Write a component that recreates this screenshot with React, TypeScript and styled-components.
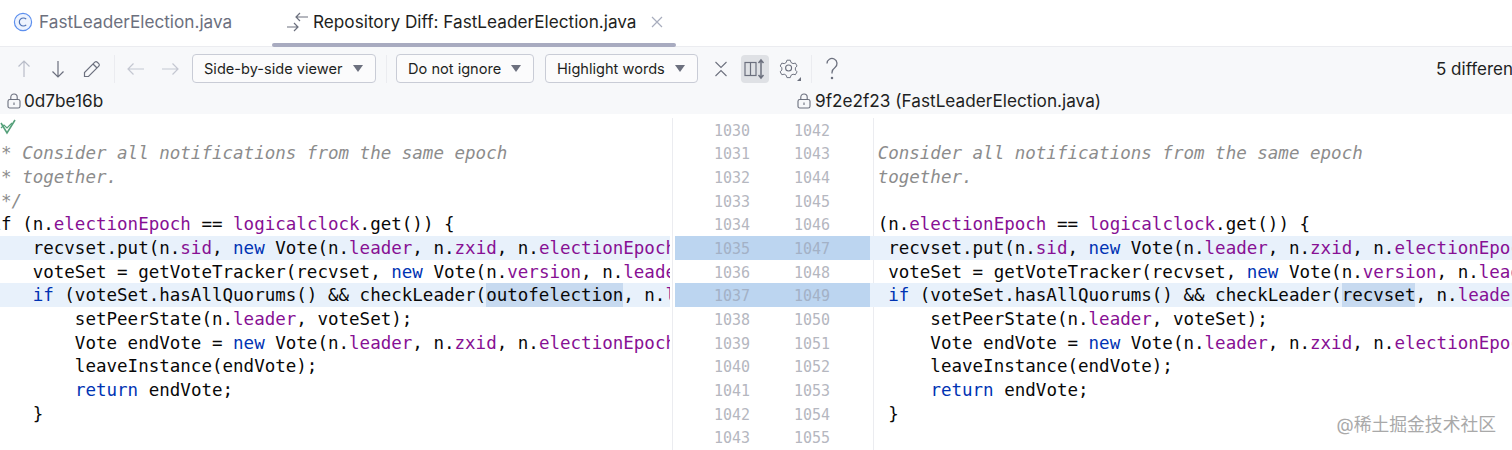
import React from 'react';
import styled, { createGlobalStyle } from 'styled-components';

const GlobalStyle = createGlobalStyle`
  html, body {
    margin: 0;
    padding: 0;
    background: #ffffff;
  }
`;

const Page = styled.div`
  width: 1512px;
  height: 450px;
  overflow: hidden;
  position: relative;
  display: flex;
  flex-direction: column;
  font-family: Inter, "Liberation Sans", sans-serif;
  color: #1e1f22;
`;

const TabBar = styled.div`
  height: 46px;
  flex: none;
  display: flex;
  background: #ffffff;
  border-bottom: 1px solid #ebecf0;
`;

const Tab = styled.div<{ $active?: boolean; $width: number }>`
  position: relative;
  width: ${p => p.$width}px;
  box-sizing: border-box;
  padding-left: ${p => (p.$active ? 14 : 13)}px;
  padding-bottom: 3px;
  display: flex;
  align-items: center;
  gap: ${p => (p.$active ? 5 : 6)}px;
  font-size: 17.2px;
  color: ${p => (p.$active ? '#1e1f22' : '#6c707e')};
  white-space: nowrap;

  ${p => p.$active && `
    &::after {
      content: '';
      position: absolute;
      left: 0;
      right: 0;
      bottom: -1px;
      height: 4px;
      border-radius: 2px;
      background: #a8abc0;
    }
  `}
`;

const CloseMark = styled.svg`
  margin-left: 9px;
`;

const Toolbar = styled.div`
  height: 43px;
  flex: none;
  box-sizing: border-box;
  padding-left: 7px;
  display: flex;
  align-items: center;
  background: #f7f8fa;
  white-space: nowrap;
`;

const IconButton = styled.div<{ $active?: boolean }>`
  width: 28px;
  height: 28px;
  margin: 0 3px;
  flex: none;
  display: flex;
  align-items: center;
  justify-content: center;
  border-radius: 4px;
  background: ${p => (p.$active ? '#dfe1e5' : 'transparent')};
`;

const Separator = styled.div<{ $left: number; $right: number }>`
  width: 1px;
  height: 28px;
  flex: none;
  margin-left: ${p => p.$left}px;
  margin-right: ${p => p.$right}px;
  background: #ebecf0;
`;

const Dropdown = styled.div<{ $width: number; $left?: number; $right?: number }>`
  width: ${p => p.$width}px;
  height: 29px;
  flex: none;
  margin-left: ${p => p.$left ?? 0}px;
  margin-right: ${p => p.$right ?? 0}px;
  box-sizing: border-box;
  padding: 0 12px 0 11px;
  display: flex;
  align-items: center;
  justify-content: space-between;
  border: 1px solid #c9ccd6;
  border-radius: 4px;
  background: #fbfbfc;
  font-size: 14.6px;
  color: #1e1f22;

  &::after {
    content: '';
    border-left: 5.5px solid transparent;
    border-right: 5.5px solid transparent;
    border-top: 7px solid #6c707e;
  }
`;

const DiffCount = styled.div`
  margin-left: 587px;
  font-size: 17px;
  color: #1e1f22;
`;

const HeaderRow = styled.div`
  height: 24px;
  flex: none;
  box-sizing: border-box;
  padding-bottom: 3px;
  display: grid;
  grid-template-columns: 797px 1fr;
  background: #f7f8fa;
  font-size: 17.2px;
`;

const HeaderCell = styled.div<{ $inset: number; $gap: number }>`
  padding-left: ${p => p.$inset}px;
  display: flex;
  align-items: center;
  gap: ${p => p.$gap}px;
  white-space: nowrap;
`;

const DiffBody = styled.div`
  flex: 1;
  min-height: 0;
  padding-top: 3.5px;
  display: flex;
  background: #ffffff;
`;

const CodePane = styled.div<{ $offset: number; $width?: number }>`
  ${p => (p.$width ? `width: ${p.$width}px; flex: none;` : 'flex: 1; min-width: 0;')}
  overflow: hidden;
  font-family: "DejaVu Sans Mono", "Liberation Mono", monospace;
  font-size: 17.52px;
  color: #080808;
  text-indent: ${p => p.$offset}px;
`;

const RightPane = styled(CodePane)`
  background: linear-gradient(#ebecf0, #ebecf0) 3px 0 / 1px 100% no-repeat;
`;

const CodeLine = styled.div<{ $changed?: boolean }>`
  height: 23.7px;
  line-height: 25.7px;
  white-space: pre;
  background: ${p => (p.$changed ? '#e8f1fb' : 'transparent')};
`;

const Gutter = styled.div`
  width: 195px;
  flex: none;
  margin-left: 2px;
  padding-left: 2px;
  border-left: 1px solid #ebecf0;
  font-family: "DejaVu Sans Mono", "Liberation Mono", monospace;
  font-size: 15px;
  color: #b5b7bf;
`;

const GutterRow = styled.div<{ $changed?: boolean }>`
  height: 23.7px;
  line-height: 26.9px;
  padding-left: 39px;
  display: grid;
  grid-template-columns: 80px 80px;
  background: ${p => (p.$changed ? '#bcd5f0' : 'transparent')};
  color: ${p => (p.$changed ? '#a3b1c6' : 'inherit')};
`;

const Comment = styled.span`
  font-style: italic;
  color: #8c8c8c;
`;

const Keyword = styled.span`
  color: #0033b3;
`;

const Field = styled.span`
  color: #871094;
`;

const WordDiff = styled.span`
  display: inline-block;
  height: 23.7px;
  text-indent: 0;
  background: #c7daf0;
`;

const CheckWrap = styled.span`
  position: absolute;
  left: 0;
  top: 119px;
  line-height: 0;
`;

const Watermark = styled.div`
  position: absolute;
  right: 16px;
  bottom: 14px;
  font-family: Inter, "Noto Sans CJK SC", sans-serif;
  font-size: 17.8px;
  line-height: 22px;
  color: #a9a9a9;
`;

const Arrow: React.FC<{ dir: 'up' | 'down' | 'left' | 'right'; color: string }> = ({ dir, color }) => {
  const rotation = { up: 0, right: 90, down: 180, left: 270 }[dir];
  return (
    <svg width="20" height="20" viewBox="0 0 20 20" fill="none" stroke={color} strokeWidth="1.2">
      <g transform={`rotate(${rotation} 10 10)`}>
        <path d="M10 2v16M4.500 7.500L10 2l5.500 5.500" />
      </g>
    </svg>
  );
};

const LockIcon = () => (
  <svg width="14" height="16" viewBox="0 0 14 16" fill="none" stroke="#6c707e" strokeWidth="1.1">
    <rect x="1" y="6.5" width="12" height="8.5" rx="1.8" />
    <path d="M3.8 6.5V4.2a3.2 3.2 0 0 1 6.4 0v2.3" />
    <path d="M7 9.5v2.5" />
  </svg>
);

const left: React.ReactNode[] = [
  '',
  <Comment> * Consider all notifications from the same epoch</Comment>,
  <Comment> * together.</Comment>,
  <Comment> */</Comment>,
  <>if (n.<Field>electionEpoch</Field> == <Field>logicalclock</Field>.get()) {'{'}</>,
  <>    recvset.put(n.<Field>sid</Field>, <Keyword>new</Keyword> Vote(n.<Field>leader</Field>, n.<Field>zxid</Field>, n.<Field>electionEpoch</Field>, n.<Field>peerEpoch</Field>));</>,
  <>    voteSet = getVoteTracker(recvset, <Keyword>new</Keyword> Vote(n.<Field>version</Field>, n.<Field>leader</Field>, n.<Field>zxid</Field>));</>,
  <>    <Keyword>if</Keyword> (voteSet.hasAllQuorums() && checkLeader(<WordDiff>outofelection</WordDiff>, n.<Field>leader</Field>, n.<Field>electionEpoch</Field>)) {'{'}</>,
  <>        setPeerState(n.<Field>leader</Field>, voteSet);</>,
  <>        Vote endVote = <Keyword>new</Keyword> Vote(n.<Field>leader</Field>, n.<Field>zxid</Field>, n.<Field>electionEpoch</Field>, n.<Field>peerEpoch</Field>);</>,
  <>        leaveInstance(endVote);</>,
  <>        <Keyword>return</Keyword> endVote;</>,
  <>    {'}'}</>,
];

// the closing comment mark sits past the clipped edge on this side
const right: React.ReactNode[] = [
  ...left.slice(0, 3),
  '',
  ...left.slice(4, 7),
  <>    <Keyword>if</Keyword> (voteSet.hasAllQuorums() && checkLeader(<WordDiff>recvset</WordDiff>, n.<Field>leader</Field>, n.<Field>electionEpoch</Field>)) {'{'}</>,
  ...left.slice(8),
];

const changedRows = [5, 7];
const gutterRows = Array.from({ length: 14 }, (_, i) => i);

const App: React.FC = () => {
  return (
    <Page>
      <GlobalStyle />
      <TabBar>
        <Tab $width={272}>
          <svg width="20" height="20" viewBox="0 0 20 20" fill="#edf3fe" stroke="#5c8fee" strokeWidth="1.2">
            <circle cx="10" cy="10" r="8.6" />
            <path d="M13.2 7.2a4 4 0 1 0 0 5.600" fill="none" stroke="#4a6fb5" />
          </svg>
          FastLeaderElection.java
        </Tab>
        <Tab $active $width={404}>
          <svg width="22" height="20" viewBox="0 0 22 20" fill="none" stroke="#6c707e" strokeWidth="1.2">
            <path d="M22 5H10M14 1l-4 4 4 4" />
            <path d="M1 15h11M8 11l4 4-4 4" />
          </svg>
          Repository Diff: FastLeaderElection.java
          <CloseMark width="12" height="12" viewBox="0 0 12 12" fill="none" stroke="#a8adbd" strokeWidth="1.2">
            <path d="M1 1l10 10M11 1L1 11" />
          </CloseMark>
        </Tab>
      </TabBar>
      <Toolbar>
        <IconButton><Arrow dir="up" color="#b9bdc9" /></IconButton>
        <IconButton><Arrow dir="down" color="#6c707e" /></IconButton>
        <IconButton>
          <svg width="20" height="20" viewBox="0 0 20 20" fill="none" stroke="#6c707e" strokeWidth="1.2">
            <path d="M2.500 17.500v-4L12.800 3.200a1.800 1.800 0 0 1 2.500 0l1.500 1.500a1.800 1.800 0 0 1 0 2.500L6.500 17.500z" />
            <path d="M11 5l4 4" />
          </svg>
        </IconButton>
        <Separator $left={5} $right={4} />
        <IconButton><Arrow dir="left" color="#c4c7d1" /></IconButton>
        <IconButton><Arrow dir="right" color="#c4c7d1" /></IconButton>
        <Dropdown $width={184} $left={5}>Side-by-side viewer</Dropdown>
        <Separator $left={10} $right={9} />
        <Dropdown $width={138}>Do not ignore</Dropdown>
        <Dropdown $width={153} $left={11} $right={6}>Highlight words</Dropdown>
        <IconButton>
          <svg width="20" height="20" viewBox="0 0 20 20" fill="none" stroke="#6c707e" strokeWidth="1.1">
            <path d="M4.500 3l5.500 5.500L15.500 3M4.500 17l5.500-5.500 5.500 5.500" />
          </svg>
        </IconButton>
        <IconButton $active>
          <svg width="24" height="22" viewBox="0 0 24 22" fill="none" stroke="#6c707e" strokeWidth="1.2">
            <rect x="2" y="4.500" width="11" height="13" />
            <path d="M7.500 4.500v13" />
            <path d="M18 2v18M15.500 5L18 2l2.500 3M15.500 17l2.500 3 2.500-3" strokeWidth="1.500" />
          </svg>
        </IconButton>
        <IconButton>
          <svg width="24" height="24" viewBox="0 0 24 24" fill="none" stroke="#6c707e" strokeWidth="1.1">
            <path d="M9.600 2.500h3.800l.8 2.600 2.300 1.300 2.700-.6 1.900 3.300-1.900 2 0 2.600 1.900 2-1.900 3.300-2.700-.6-2.300 1.300-.8 2.600H9.600l-.8-2.600-2.300-1.300-2.700.6-1.900-3.300 1.900-2v-2.600l-1.900-2 1.900-3.300 2.700.6 2.300-1.300z" transform="translate(1.500 1) scale(0.88)" />
            <circle cx="11.600" cy="11" r="3" />
            <path d="M24 20v4h-4z" fill="#6c707e" stroke="none" />
          </svg>
        </IconButton>
        <Separator $left={5} $right={3} />
        <IconButton>
          <svg width="20" height="24" viewBox="0 0 20 24" fill="none" stroke="#6c707e" strokeWidth="1.3">
            <path d="M5 6.500a5 5 0 1 1 8 4c-2 1.500-3 2.500-3 5v1" />
            <circle cx="10" cy="21" r="0.6" fill="#6c707e" />
          </svg>
        </IconButton>
        <DiffCount>5 differences</DiffCount>
      </Toolbar>
      <HeaderRow>
        <HeaderCell $inset={7} $gap={3}><LockIcon />0d7be16b</HeaderCell>
        <HeaderCell $inset={0} $gap={4}><LockIcon />9f2e2f23 (FastLeaderElection.java)</HeaderCell>
      </HeaderRow>
      <DiffBody>
        <CodePane $offset={-9.5} $width={670}>
          {left.map((line, i) => (
            <CodeLine key={i} $changed={changedRows.includes(i)}>{line}</CodeLine>
          ))}
        </CodePane>
        <Gutter>
          {gutterRows.map(i => (
            <GutterRow key={i} $changed={changedRows.includes(i)}>
              <span>{1030 + i}</span>
              <span>{1042 + i}</span>
            </GutterRow>
          ))}
        </Gutter>
        <RightPane $offset={-24}>
          {right.map((line, i) => (
            <CodeLine key={i} $changed={changedRows.includes(i)}>{line}</CodeLine>
          ))}
        </RightPane>
      </DiffBody>
      <CheckWrap>
        <svg width="17" height="16" viewBox="0 0 17 16" fill="none" stroke="#55a07a" strokeWidth="1.6">
          <path d="M1 4l6 10 8-13" />
          <path d="M1 9l3-3 3 3 5-5" strokeWidth="1.2" />
        </svg>
      </CheckWrap>
      <Watermark>@稀土掘金技术社区</Watermark>
    </Page>
  );
};

export default App;
